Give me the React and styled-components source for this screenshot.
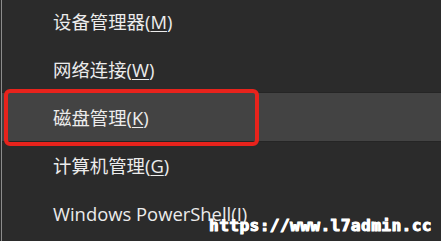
import React from 'react';
import styled, { createGlobalStyle } from 'styled-components';

const Global = createGlobalStyle`
  html, body {
    margin: 0;
    padding: 0;
    background: #2b2b2b;
  }
`;

const Menu = styled.div`
  position: relative;
  width: 440px;
  height: 241px;
  overflow: hidden;
  background: #2b2b2b;
  border-left: 1px solid #8c8c8c;
  margin-left: 1px;
  box-sizing: border-box;
  font-family: "Open Sans", "Noto Sans CJK SC", sans-serif;
`;

const List = styled.ul`
  list-style: none;
  margin: 0;
  padding: 0;
  margin-top: -3px;
`;

const Item = styled.li`
  display: flex;
  align-items: center;
  height: 48px;
  padding-left: 51px;
  font-size: 18.4px;
  color: #ececec;
  background: ${p => (p.$active ? '#434343' : 'transparent')};
  border-top: ${p => (p.$active ? '1px solid #252525' : 'none')};
  border-bottom: ${p => (p.$active ? '1px solid #252525' : 'none')};
  margin: ${p => (p.$active ? '-1px 0' : '0')};
  position: relative;
  z-index: ${p => (p.$active ? 1 : 0)};
`;

const Key = styled.span`
  text-decoration: underline;
  text-underline-offset: 2px;
`;

// red annotation box drawn over the highlighted row
const Marker = styled.div`
  position: absolute;
  left: 2px;
  top: 89px;
  width: 255px;
  height: 57px;
  box-sizing: border-box;
  border: 4px solid #e8231c;
  border-radius: 6px;
  z-index: 2;
`;

const Watermark = styled.div`
  position: absolute;
  left: 207px;
  top: 216px;
  font-family: "DejaVu Sans Mono", monospace;
  font-weight: bold;
  font-size: 16px;
  line-height: 19px;
  color: #ffffff;
  letter-spacing: 0.5px;
  white-space: nowrap;
  -webkit-text-stroke: 0.9px #fff;
  text-shadow: 0.5px 0 0 #fff;
  z-index: 3;
`;

const items = [
  { label: '设备管理器', key: 'M' },
  { label: '网络连接', key: 'W' },
  { label: '磁盘管理', key: 'K', active: true },
  { label: '计算机管理', key: 'G' },
  { label: 'Windows PowerShell', key: 'I' },
];

export default function App() {
  return (
    <>
      <Global />
      <Menu>
        <List>
          {items.map(it => (
            <Item key={it.key} $active={it.active}>
              {it.label}(<Key>{it.key}</Key>)
            </Item>
          ))}
        </List>
        <Marker />
        <Watermark>https://www.l7admin.cc</Watermark>
      </Menu>
    </>
  );
}
